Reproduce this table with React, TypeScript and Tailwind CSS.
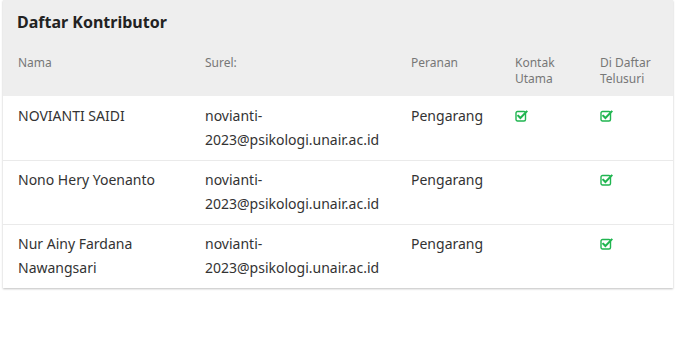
import React from 'react';

type Contributor = {
  name: string;
  email: string;
  role: string;
  primary: boolean;
  listed: boolean;
};

const contributors: Contributor[] = [
  { name: 'NOVIANTI SAIDI', email: 'novianti-2023@psikologi.unair.ac.id', role: 'Pengarang', primary: true, listed: true },
  { name: 'Nono Hery Yoenanto', email: 'novianti-2023@psikologi.unair.ac.id', role: 'Pengarang', primary: false, listed: true },
  { name: 'Nur Ainy Fardana Nawangsari', email: 'novianti-2023@psikologi.unair.ac.id', role: 'Pengarang', primary: false, listed: true },
];

// fa "check-square-o" look-alike
const CheckSquare = () => (
  <svg width="13" height="12" viewBox="0 0 13 12" className="mt-[6px]">
    <rect x="1" y="1.5" width="9.5" height="9.5" rx="1.5" fill="none" stroke="#20b550" strokeWidth="1.4" />
    <path d="M3.2 5.8 L5.4 8 L11.6 1.6" fill="none" stroke="#20b550" strokeWidth="2" strokeLinecap="square" />
  </svg>
);

const cols = 'grid grid-cols-[187px_206px_104px_85px_88px]';

export default function App() {
  return (
    <div className="w-[694px] h-[340px] bg-white font-['Noto_Sans',sans-serif]">
      <div className="ml-[3px] w-[670px] bg-white shadow-[0_1px_2px_rgba(0,0,0,0.25)]">
        {/* Header */}
        <div className="bg-[#eeeeee] pb-[9px]">
          <h2 className="px-[14px] pt-[11px] text-[16px] leading-[22px] font-bold text-[#222]">
            Daftar Kontributor
          </h2>
          <div className={`${cols} mt-[22px] text-[12px] leading-[16px] text-[#777]`}>
            <div className="px-[15px]">Nama</div>
            <div className="px-[15px]">Surel:</div>
            <div className="px-[15px]">Peranan</div>
            <div className="px-[15px]">Kontak<br />Utama</div>
            <div className="px-[15px]">Di Daftar<br />Telusuri</div>
          </div>
        </div>

        {/* Rows */}
        {contributors.map((c, i) => (
          <div
            key={i}
            className={`${cols} pb-[8px] text-[14px] leading-[24px] text-[#333] ${i > 0 ? 'pt-[7px] border-t border-[#eaeaea]' : 'pt-[8px]'}`}
          >
            <div className="px-[15px]">{c.name}</div>
            <div className="px-[15px]">{c.email}</div>
            <div className="px-[15px]">{c.role}</div>
            <div className="px-[15px]">{c.primary && <CheckSquare />}</div>
            <div className="px-[15px]">{c.listed && <CheckSquare />}</div>
          </div>
        ))}
      </div>
    </div>
  );
}
